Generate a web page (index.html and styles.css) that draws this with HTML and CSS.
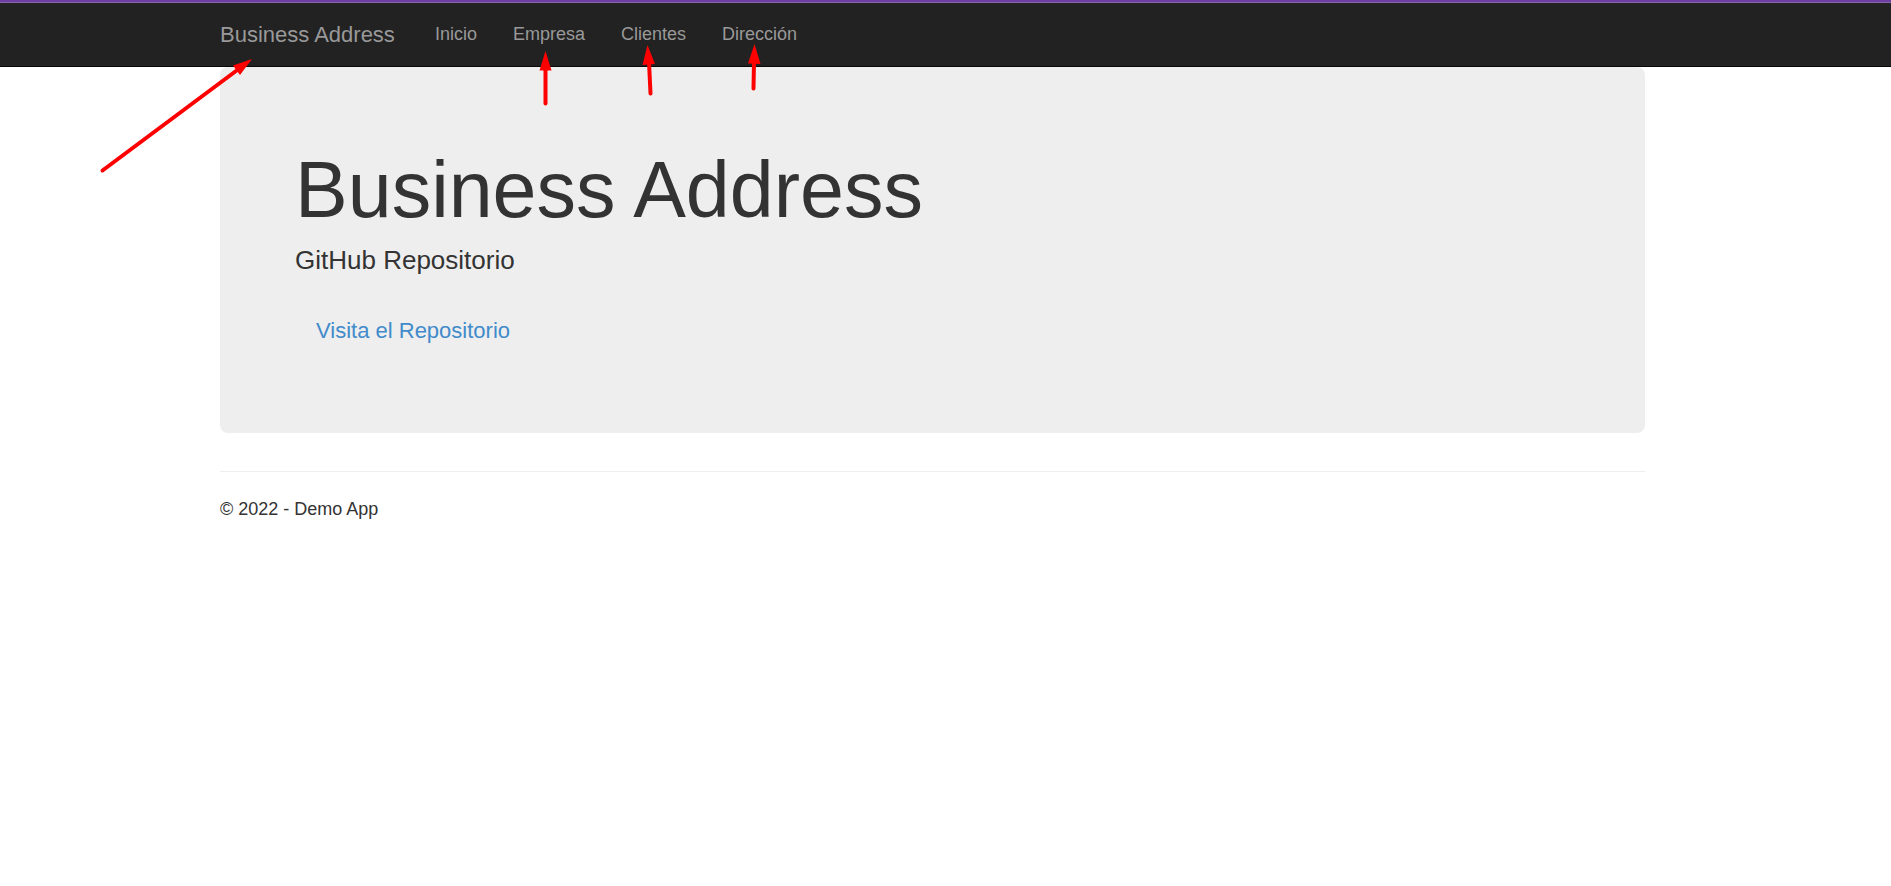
FILE: index.html
```html
<!DOCTYPE html>
<html lang="es">
<head>
<meta charset="utf-8">
<meta name="viewport" content="width=device-width, initial-scale=1">
<title>Business Address</title>
<link rel="stylesheet" href="styles.css">
</head>
<body>
<header class="navbar">
  <nav class="container navbar-inner">
    <a class="brand" href="#">Business Address</a>
    <ul class="nav-list">
      <li><a href="#">Inicio</a></li>
      <li><a href="#">Empresa</a></li>
      <li><a href="#">Clientes</a></li>
      <li><a href="#">Dirección</a></li>
    </ul>
  </nav>
</header>
<div class="body-content">
  <div class="container">
    <main class="jumbotron">
      <h1>Business Address</h1>
      <p class="lead">GitHub Repositorio</p>
      <p class="action"><a href="#">Visita el Repositorio</a></p>
    </main>
    <footer class="footer">© 2022 - Demo App</footer>
  </div>
</div>
<svg class="arrows" width="800" height="200" viewBox="0 0 800 200" aria-hidden="true">
  <g fill="none" stroke="#f00" stroke-width="4" stroke-linecap="round">
    <path d="M102.5 170.5L238 69.500"/>
    <path d="M545.500 103.500V68"/>
    <path d="M650.500 93.500L649 62"/>
    <path d="M753.500 88.500L754 61"/>
  </g>
  <g fill="#f00">
    <path d="M252 59L233 65.500L240 75z"/>
    <path d="M545.500 51L539.500 70.500H551.500z"/>
    <path d="M647.500 45L642.500 65L655 64z"/>
    <path d="M754.500 44L748 63.500L760.500 64z"/>
  </g>
</svg>
</body>
</html>
```

FILE: styles.css
```css
*,
*::before {
  box-sizing: border-box;
}

body {
  margin: 0;
  background: #fff;
  color: #333;
  font-family: "Liberation Sans", Arial, sans-serif;
  font-size: 18px;
  line-height: 25px;
}

a {
  color: #428bca;
  text-decoration: none;
}

.container {
  width: min(100% - 40px, 1425px);
  margin: 0 auto;
}

.navbar {
  padding-right: 26px;
  background: #222;
  border-bottom: 1px solid #080808;
}

.navbar::before {
  content: "";
  display: block;
  height: 3px;
  margin-right: -26px;
  background: #6b3fa0;
  border-bottom: 1px solid #8a64b0;
}

.navbar-inner {
  display: flex;
  flex-wrap: wrap;
  align-items: center;
  gap: 0 40px;
  min-height: 63px;
  padding-bottom: 1px;
}

.navbar a {
  color: #999;
}

.brand {
  font-size: 22px;
}

.nav-list {
  display: flex;
  flex-wrap: wrap;
  gap: 0 36px;
  margin: 0;
  padding: 0;
  list-style: none;
}

.body-content {
  padding-right: 26px;
}

.jumbotron {
  padding: 83px 75px 84px;
  margin-bottom: 38px;
  background: #eee;
  border-radius: 8px;
}

.jumbotron h1 {
  margin: 0 0 13px;
  font-size: 79px;
  font-weight: 400;
  line-height: 79px;
}

.lead {
  margin: 0 0 38px;
  font-size: 26px;
  line-height: 36px;
}

.action {
  margin: 0;
  padding: 0 21px 3px;
  font-size: 22px;
  line-height: 30px;
}

.footer {
  padding-top: 25px;
  border-top: 1px solid #eee;
}

.arrows {
  position: absolute;
  top: 0;
  left: 0;
  pointer-events: none;
}
```
